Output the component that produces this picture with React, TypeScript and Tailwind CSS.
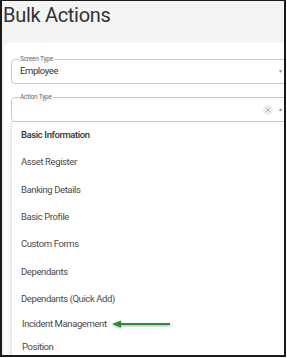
import { X } from "lucide-react";

const items = [
  { label: "Basic Information", h: "h-[27px]", bold: true },
  { label: "Asset Register", h: "h-[27px]" },
  { label: "Banking Details", h: "h-[28px]" },
  { label: "Basic Profile", h: "h-[27px]" },
  { label: "Custom Forms", h: "h-[27px]" },
  { label: "Dependants", h: "h-[28px]" },
  { label: "Dependants (Quick Add)", h: "h-[27px]" },
  { label: "Incident Management", h: "h-[22px]", shift: true, arrow: true },
  { label: "Position", h: "h-[24px]", shift: true },
];

function GreenArrow() {
  return (
    <svg width="60" height="10" viewBox="0 0 60 10" className="drop-shadow-[0_1px_1px_rgba(0,0,0,0.35)]">
      <line x1="6" y1="5" x2="58" y2="5" stroke="#2a8a3e" strokeWidth="2" />
      <polygon points="0,5 9,1.5 9,8.5" fill="#2a8a3e" />
    </svg>
  );
}

export default function App() {
  return (
    <div className="w-[287px] h-[358px] bg-white" style={{ fontFamily: "Roboto, 'Liberation Sans', sans-serif" }}>
      <div className="w-[286px] h-[357px] border-t border-l-2 border-r-2 border-b-2 border-[#1a1a1a] bg-[#f4f4f4] overflow-hidden flex flex-col">
        <h1 className="h-[42px] shrink-0 pl-px text-[20px] leading-[28px] text-[#333] tracking-[-0.3px]">Bulk Actions</h1>
        <div className="flex-1 ml-[2px] bg-white rounded-tl-[4px] pt-[16px] pl-[7px] overflow-hidden">
          {/* Screen Type */}
          <div className="relative w-[290px] h-[25px] border border-[#c9c9c9] rounded-[4px] flex items-center pl-[8px] pr-[17px]">
            <span className="absolute -top-[5px] left-[7px] bg-white px-px text-[6.5px] leading-[8px] text-[#666] tracking-[-0.2px]">Screen Type</span>
            <span className="text-[9.5px] text-[#333] tracking-[-0.4px]">Employee</span>
            <span className="ml-auto text-[5px] text-[#888]">▼</span>
          </div>

          {/* Action Type */}
          <div className="relative mt-[13px] w-[290px] h-[25px] border border-[#c9c9c9] rounded-[4px] flex items-center pr-[17px]">
            <span className="absolute -top-[5px] left-[7px] bg-white px-px text-[6.5px] leading-[8px] text-[#666] tracking-[-0.2px]">Action Type</span>
            <span className="ml-auto mr-[5px] w-[10px] h-[10px] rounded-full bg-[#eeeeee] flex items-center justify-center text-[#999]">
              <X size={8} strokeWidth={2} />
            </span>
            <span className="text-[5px] text-[#888]">▲</span>
          </div>

          {/* Menu */}
          <div className="-mt-[1px] w-[290px] bg-white border-l border-t border-[#e6e6e6] shadow-[-2px_2px_4px_rgba(0,0,0,0.08)]">
            {items.map((it) => (
              <div
                key={it.label}
                className={`${it.h} flex items-center ${it.shift ? "pl-[10px]" : "pl-[9px]"} gap-[5px]`}
              >
                <span
                  className={`text-[9.5px] tracking-[-0.4px] ${it.bold ? "font-medium text-[#333]" : "text-[#4a4a4a]"}`}
                >
                  {it.label}
                </span>
                {it.arrow && <GreenArrow />}
              </div>
            ))}
          </div>
        </div>
      </div>
    </div>
  );
}
